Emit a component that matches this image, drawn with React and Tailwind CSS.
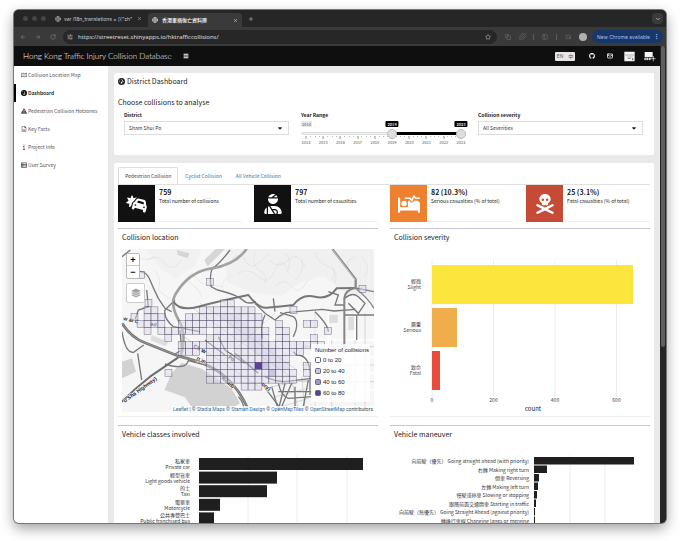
import React, { useState } from 'react';
import { ArrowLeft, ArrowRight, RotateCw, Star, Puzzle, Plus, X, Globe, SlidersHorizontal, ChevronDown, Copy, PanelLeft, ListMusic, Mail, MoreVertical, Menu } from 'lucide-react';
import {
  FaRegMap, FaGaugeHigh, FaTriangleExclamation, FaRegFileLines, FaInfo, FaTableList,
  FaGithub, FaCarBurst, FaUserInjured, FaBedPulse, FaSkullCrossbones, FaCaretDown, FaLayerGroup
} from 'react-icons/fa6';

const NAV_ITEMS = [
  { label: 'Collision Location Map', icon: FaRegMap },
  { label: 'Dashboard', icon: FaGaugeHigh, active: true },
  { label: 'Pedestrian Collision Hotzones', icon: FaTriangleExclamation },
  { label: 'Key Facts', icon: FaRegFileLines },
  { label: 'Project Info', icon: FaInfo },
  { label: 'User Survey', icon: FaTableList },
];

const STATS = [
  { value: '759', label: 'Total number of collisions', icon: FaCarBurst, color: 'bg-[#111111]' },
  { value: '797', label: 'Total number of casualties', icon: FaUserInjured, color: 'bg-[#111111]' },
  { value: '82 (10.3%)', label: 'Serious casualties (% of total)', icon: FaBedPulse, color: 'bg-[#ee8130]' },
  { value: '25 (3.1%)', label: 'Fatal casualties (% of total)', icon: FaSkullCrossbones, color: 'bg-[#c64b37]' },
];

const YEARS = [2014, 2015, 2016, 2017, 2018, 2019, 2020, 2021, 2022, 2023];

const SEVERITY = [
  { zh: '輕微', en: 'Slight', width: 201, fill: '#fce53d' },
  { zh: '嚴重', en: 'Serious', width: 25, fill: '#f0ad4b' },
  { zh: '致命', en: 'Fatal', width: 8, fill: '#e74c3c' },
];

const CLASSES = [
  { zh: '私家車', en: 'Private car', width: 164 },
  { zh: '輕型貨車', en: 'Light goods vehicle', width: 78 },
  { zh: '的士', en: 'Taxi', width: 68 },
  { zh: '電單車', en: 'Motorcycle', width: 21 },
  { zh: '公共專營巴士', en: 'Public franchised bus', width: 15 },
];

const MANEUVERS = [
  { label: '向前駛（優先） Going straight ahead (with priority)', width: 100 },
  { label: '右轉 Making right turn', width: 13 },
  { label: '倒車 Reversing', width: 5 },
  { label: '左轉 Making left turn', width: 4 },
  { label: '慢駛或停車 Slowing or stopping', width: 3 },
  { label: '跟隨前面交通開車 Starting in traffic', width: 2 },
  { label: '向前駛（無優先） Going Straight Ahead (against priority)', width: 1 },
  { label: '轉換行車線 Changing lanes or merging', width: 1 },
];

// [row, first column, last column] counted from the busiest cell
const CELL_RUNS = [
  [-9, -5, -4],
  [-8, -16, -15], [-8, -8, -1],
  [-7, -16, -14], [-7, -10, 0],
  [-6, -17, -14], [-6, -11, 0], [-6, 3, 3], [-6, 7, 8],
  [-5, -16, -16], [-5, -14, -8], [-5, -6, 1], [-5, 3, 4],
  [-4, -13, -13], [-4, -7, 1], [-4, 3, 4], [-4, 8, 8],
  [-3, -11, 9],
  [-2, -11, -9], [-2, -7, -5], [-2, -3, 6],
  [-1, -7, 4],
  [0, -7, 4], [0, 7, 7],
  [1, -7, 5], [1, 7, 7],
  [2, -7, 5],
  [3, -2, 0],
];

const LONE_CELLS = [[275, 115], [150, 388], [525, 200], [628, 262], [732, 137], [90, 178], [68, 95], [48, 221]];

const LEGEND = [
  ['0 to 20', '#f7f5fb'],
  ['20 to 40', '#cbc9e2'],
  ['40 to 60', '#9e9ac8'],
  ['60 to 80', '#5b4397'],
];

function BrowserChrome() {
  return (
    <div className="text-[#c9c9c9] font-['Inter','Noto_Sans_CJK_TC',sans-serif] text-[5px] leading-[8px]">
      <div className="flex items-center h-[17px] bg-[#262626] pl-[9px] pr-[3px]">
        <div className="flex gap-[4px]">
          <span className="w-[5px] h-[5px] rounded-full bg-[#454545]" />
          <span className="w-[5px] h-[5px] rounded-full bg-[#454545]" />
          <span className="w-[5px] h-[5px] rounded-full bg-[#454545]" />
        </div>
        <div className="flex flex-none items-center w-[102px] pl-[9px] pr-[6px]">
          <Globe className="w-[6px] h-[6px] mr-[3px] shrink-0" />
          <span className="flex-1 whitespace-nowrap">{'var i18n_translations = [{"zh"'}</span>
          <X className="w-[5px] h-[5px] shrink-0" />
        </div>
        <div className="flex items-center w-[94px] h-[14px] self-end rounded-t bg-[#3a3a3a] pl-[4px] pr-[4px] text-white">
          <Globe className="w-[6px] h-[6px] mr-[4px]" />
          <span className="flex-1 font-medium">香港車禍傷亡資料庫</span>
          <X className="w-[5px] h-[5px]" />
        </div>
        <button aria-label="New tab" className="ml-[6px]"><Plus className="w-[6px] h-[6px]" /></button>
        <button aria-label="Search tabs" className="ml-auto flex items-center justify-center w-[11px] h-[11px] rounded bg-[#3a3a3a]">
          <ChevronDown className="w-[6px] h-[6px]" strokeWidth={3} />
        </button>
      </div>
      <div className="flex items-center h-[19px] bg-[#3a3a3a] pl-[6px] pr-[3px]">
        <div className="flex gap-[9px] text-[#8a8a8a]">
          <button aria-label="Back"><ArrowLeft className="w-[6px] h-[6px]" /></button>
          <button aria-label="Forward"><ArrowRight className="w-[6px] h-[6px]" /></button>
          <button aria-label="Reload"><RotateCw className="w-[6px] h-[6px]" /></button>
        </div>
        <div className="flex flex-1 items-center h-[14px] ml-[7px] mr-[8px] rounded-full bg-[#272727] pl-[4px] pr-[6px]">
          <SlidersHorizontal className="w-[6px] h-[6px] mr-[5px]" />
          <input
            aria-label="Address"
            readOnly
            value="https://streetreset.shinyapps.io/hktrafficcollisions/"
            className="flex-1 min-w-0 bg-transparent outline-none font-['Open_Sans',sans-serif] text-[6px] text-[#e0e0e0]"
          />
          <Star className="w-[6px] h-[6px]" />
        </div>
        <div className="flex items-center text-[#777777]">
          <Copy className="w-[6px] h-[6px] mr-[8px]" />
          <Puzzle className="w-[7px] h-[7px] mr-[7px]" />
          <span className="w-px h-[6px] bg-[#5c5c5c] mr-[8px]" />
          <PanelLeft className="w-[6px] h-[6px] mr-[8px]" />
          <span className="w-px h-[6px] bg-[#5c5c5c] mr-[8px]" />
          <ListMusic className="w-[6px] h-[6px] mr-[8px]" />
          <span className="w-[8px] h-[8px] rounded-full bg-[#b0b0b0] mr-[5px]" />
        </div>
        <button className="flex items-center h-[13px] rounded-full bg-[#17376b] text-[#a5bfe8] pl-[5px] pr-[3px] whitespace-nowrap">
          New Chrome available
          <MoreVertical className="w-[7px] h-[7px] ml-[3px]" />
        </button>
      </div>
    </div>
  );
}

function Header() {
  return (
    <header className="flex items-center h-[20px] bg-[#0f0f0f] text-white pl-[9px] pr-[4px]">
      <h1 className="font-['Lato',sans-serif] font-light text-[8px] leading-[12px] whitespace-nowrap">
        Hong Kong Traffic Injury Collision Database
      </h1>
      <button aria-label="Toggle sidebar" className="ml-[11px]"><Menu className="w-[6px] h-[6px]" strokeWidth={4} /></button>
      <div className="flex items-center ml-auto">
        <button className="flex items-center justify-center gap-[5px] w-[20px] h-[9px] mr-[14px] rounded-[1px] bg-[#e6e6e6] text-[#555555] text-[5px] leading-[8px]">
          <span>EN</span><span>中</span>
        </button>
        <a href="#github" aria-label="GitHub" className="mr-[12px]"><FaGithub className="w-[6px] h-[6px]" /></a>
        <a href="#mail" aria-label="Email" className="mr-[11px]"><Mail className="w-[6px] h-[6px]" strokeWidth={3} /></a>
        <a href="#street-reset" aria-label="Street Reset" className="mr-[9px]">
          <svg className="w-[11px] h-[11px]" viewBox="0 0 33 33">
            <path d="M1 2h31v29H1z" fill="#f4f4f4" />
            <path d="M1 12h31" stroke="#999999" strokeWidth="2" />
            <path d="M10 17h16v2H10zM11 22h9v2h-9zM24 22h4v6h-4z" fill="#777777" />
          </svg>
        </a>
        <a href="#map" aria-label="Partner">
          <svg className="w-[12px] h-[11px]" viewBox="0 0 36 33">
            <path d="M2 3h24v16H2z" fill="#f4f4f4" />
            <path d="M2 22h3v4H2zM8 22h4v4H8zM15 22h4v4h-4zM28 15v16M20 23h15" fill="#cccccc" stroke="#f4f4f4" strokeWidth="2" />
          </svg>
        </a>
      </div>
    </header>
  );
}

function Sidebar() {
  return (
    <nav className="w-[94px] shrink-0 bg-white">
      {NAV_ITEMS.map(({ label, icon: Icon, active }) => (
        <a
          key={label}
          href="#nav"
          className={`flex items-center gap-[1px] h-[18px] pl-[5px] text-[5px] leading-[8px] whitespace-nowrap border-l-2 ${
            active ? 'border-black text-black font-medium' : 'border-transparent text-[#555555]'
          }`}
        >
          <Icon className="w-[6px] h-[6px]" />
          {label}
        </a>
      ))}
    </nav>
  );
}

function SelectBox({ id, label, value }) {
  return (
    <div>
      <label htmlFor={id} className="block font-bold text-[5px] leading-[8px] mb-[2px]">{label}</label>
      <div className="relative">
        <select id={id} className="block w-full h-[14px] appearance-none border border-[#dddddd] bg-white pl-[4px] text-[5px] leading-[8px] text-[#333333]">
          <option>{value}</option>
        </select>
        <FaCaretDown className="absolute right-[6px] top-[4px] w-[6px] h-[6px] pointer-events-none" />
      </div>
    </div>
  );
}

function YearRange() {
  const [from, setFrom] = useState(2019);
  const [to, setTo] = useState(2023);
  const pos = (year) => `${((year - 2014) / 9) * 100}%`;
  const thumb = 'absolute inset-x-0 top-[8px] w-full h-[10px] appearance-none bg-transparent pointer-events-none [&::-webkit-slider-thumb]:appearance-none [&::-webkit-slider-thumb]:pointer-events-auto [&::-webkit-slider-thumb]:w-[10px] [&::-webkit-slider-thumb]:h-[10px] [&::-webkit-slider-thumb]:rounded-full [&::-webkit-slider-thumb]:border [&::-webkit-slider-thumb]:border-solid [&::-webkit-slider-thumb]:border-[#bbbbbb] [&::-webkit-slider-thumb]:bg-[#dedede]';

  return (
    <fieldset>
      <legend className="font-bold text-[5px] leading-[8px] mb-[2px]">Year Range</legend>
      <div className="relative h-[24px] text-[4px] leading-[6px]">
        <span className="absolute left-0 top-0 px-[1px] bg-[#e8e8e8] text-[#555555]">2014</span>
        <div className="absolute inset-x-0 top-[11px] h-[3px] rounded-full border border-[#dddddd] bg-[#f0f0f0]" />
        <div className="absolute top-0 left-[5px] right-[5px] h-full">
          <div className="absolute top-[11px] h-[3px] bg-black" style={{ left: pos(from), right: `${((2023 - to) / 9) * 100}%` }} />
          {[from, to].map((year, i) => (
            <span key={i} className="absolute top-0 -translate-x-1/2 px-[2px] rounded-[1px] bg-black text-white font-medium" style={{ left: pos(year) }}>{year}</span>
          ))}
          {YEARS.map((year) => (
            <span key={year} className="absolute top-[15px] -translate-x-1/2 flex flex-col items-center text-[#555555]" style={{ left: pos(year) }}>
              <span className="w-px h-[3px] bg-[#999999]" />
              {year}
            </span>
          ))}
          <div className="absolute inset-x-0 top-[15px] flex justify-between">
            {Array.from({ length: 37 }, (_, i) => <span key={i} className="w-px h-px bg-[#bbbbbb]" />)}
          </div>
        </div>
        <input type="range" aria-label="From year" min={2014} max={2023} value={from} onChange={(e) => setFrom(Math.min(+e.target.value, to))} className={thumb} />
        <input type="range" aria-label="To year" min={2014} max={2023} value={to} onChange={(e) => setTo(Math.max(+e.target.value, from))} className={thumb} />
      </div>
    </fieldset>
  );
}

function Card({ title, children }) {
  return (
    <section className="border-t border-[#c4c6d4] border-b border-b-[#eeeeee]">
      <h3 className="px-[4px] pt-[3px] text-[7px] leading-[10px]">{title}</h3>
      {children}
    </section>
  );
}

function CollisionMap() {
  const cell = 20.8;
  const fillFor = (row, col) => {
    if (row === 0 && col === 0) return '#5b4397';
    if ((row === 1 && col === 2) || (row === 0 && col === 1)) return '#9e98d0';
    if (row > -8 && row < 1 && Math.abs(row - col + 3) < 2) return '#c9c5e2';
    if (row === 0 && col === -1) return '#c0bbdf';
    return '#dcd9ea';
  };

  return (
    <div className="relative mx-[4px] mt-[7px] mb-[4px]">
      <svg className="block w-full" viewBox="21 27 756 489" fill="none">
        <rect x="21" y="27" width="756" height="489" fill="#f6f6f6" />
        {/* hills and parks */}
        <path d="M330 27h447v150l-90-20-60-50-70 20-60 40-90-10-70-30z" fill="#f0f0f0" />
        <path d="M90 27h170l-20 50-60 40-40-30z" fill="#f1f1f1" />
        <path d="M185 30l38 10-5 15-30-10zM268 60l34-33h28l-52 52z" fill="#d6d6d6" />
        <path d="M21 365l30-10 12 40-42 20zM148 450l22-50 30-32 60 18 90 60 25 44-20 12H230l-20-30z" fill="#d2d2d2" />
        <path d="M110 285l50 20-8 14-46-18zM640 225h28v24h-28zM700 230h22v40h-22z" fill="#dddddd" />
        <g stroke="#d9d9d9" strokeWidth="1.5">
          <path d="M100 60q30-20 50 10t50-10M60 40q20 30 60 10M350 60q25-30 40 0t40 10 30-30M370 100q30-20 60 10t50-20 40 10M460 60q30 30 60 0t50 20M600 40q10 30 40 40t10 40M480 140q30-30 50 0t50-20M560 60q10 40-20 60M650 80q20 20 10 50" />
          <path d="M210 120q40 20 50 50M230 100l30 30 60 10M120 90q20 30 10 60l40 30M720 50q-30 10-20 30M340 110q-30 20-10 50M740 50q30 30 10 60M420 40q-10 30 10 50 30 10 20 40M510 40q20 10 10 50" />
        </g>
        {/* minor streets */}
        <path d="M220 200l300 210M250 190l290 200M300 180l240 170M200 280l240 160M230 370l180-150M280 400l200-180M340 420l160-150M400 430l120-110M600 215v290M640 215v290M560 300h217M560 350h217M560 400h217M560 450h217M720 220v290" stroke="#ffffff" strokeWidth="5" />
        <path d="M225 200l300 210M255 190l290 200M200 285l240 160M280 400l200-180M560 320h217M560 375h217M560 425h217M600 215v290M720 300v200M750 220v290M470 440l110-20M480 470l100-25M500 500l80-25M530 420l20 90M560 410l10 100M650 300v210" stroke="#b5b5b5" strokeWidth="1.5" />
        {/* secondary roads */}
        <g stroke="#797979" strokeWidth="4">
          <path d="M345 30q-30 40-52 55-10 15-5 55l20 10q60 15 75 30t40 5" />
          <path d="M75 95q20 0 30 25t25 55l20 30 20 10M21 50l25-20M95 150l5 50-30 10-10 30M150 210q-5 25 25 50l80 15M150 210l30-30" />
          <path d="M420 190l30 30 30 20 12-10 20-12 110-10 35 5 65-5M475 175l5 40M495 218l40 12q15 10 8 40l-8 20M450 225q-15 30-8 70M600 215q40 40 40 60M690 225h87M725 225v75M640 155l30 10-10 30h30M690 175q20-20 40-5l20 20-20 30-30-30" />
          <path d="M68 340l12 80M21 275q10 65 35 62l30-22M195 270l5 60-25 15M270 300l60 45M310 290l20 40 60 40M360 340l70 60M440 430l60 80M490 430q10 40 30 45l70-5M500 500l30-70M540 440v70M580 420l-15 80M490 455h100M535 335l10 10q40 0 40 60v60" />
          <path d="M150 372q60 20 70-10l40 10M370 470q20 20 15 45M450 410q30 15 60 15l80-10M470 440l20 70M510 430l-20 80" />
        </g>
        {/* highways */}
        <path d="M395 27Q360 75 290 85T180 165Q165 195 191 240T197 350" stroke="#a2a2a2" strokeWidth="8" />
        <path d="M175 185Q195 215 250 200T400 165Q430 205 455 203T535 195Q560 160 600 170T665 145L721 144" stroke="#777777" strokeWidth="6" />
        <path d="M721 144Q690 150 688 175V340" stroke="#858585" strokeWidth="6" />
        <path d="M721 144Q760 175 777 205M721 144L777 155" stroke="#858585" strokeWidth="4" />
        <path d="M652 27L722 118V148" stroke="#8a8a8a" strokeWidth="7" />
        <path d="M651 27L721 120" stroke="#e5e5e5" strokeWidth="2" />
        <path d="M21 485Q60 445 105 410L190 352" stroke="#6f6f6f" strokeWidth="6" />
        <path d="M21 250Q50 295 90 308L195 350Q285 370 330 410T398 505" stroke="#747474" strokeWidth="8" />
        <path d="M21 250Q50 295 90 308L195 350Q285 370 330 410T398 505" stroke="#a8a8a8" strokeWidth="2" />
        <g className="font-['Liberation_Sans',sans-serif]" fill="#222222" stroke="#ffffff" strokeWidth="3" paintOrder="stroke" fontSize="16" fontWeight="bold">
          <text transform="translate(30 488) rotate(-36)">o Sha Highway)</text>
          <text transform="translate(24 240) rotate(14)">w at C</text>
          <text transform="translate(105 256) rotate(12)">ad</text>
          <text transform="translate(234 322) rotate(30)">Ch W</text>
          <text transform="translate(243 361) rotate(20)">(Lin</text>
          <text transform="translate(338 354) rotate(35)">Po</text>
          <text transform="translate(318 416) rotate(40)">Road)</text>
          <text transform="translate(438 435) rotate(35)">ory)</text>
        </g>
        {/* collision grid */}
        <g stroke="#3d3654" strokeOpacity="0.7" strokeWidth="1.5">
          {CELL_RUNS.flatMap(([row, first, last]) =>
            Array.from({ length: last - first + 1 }, (_, i) => {
              const col = first + i;
              return (
                <rect
                  key={`${row}/${col}`}
                  x={420 + col * cell}
                  y={367 + row * cell}
                  width={cell}
                  height={cell}
                  fill={fillFor(row, col)}
                  fillOpacity={row === 0 && col === 0 ? 1 : 0.5}
                />
              );
            })
          )}
          {LONE_CELLS.map(([x, y]) => (
            <rect key={`${x}-${y}`} x={x} y={y} width={cell} height={cell} fill="#dcd9ea" fillOpacity="0.5" />
          ))}
        </g>
      </svg>

      <div className="absolute left-[4px] top-[4px] flex flex-col w-[14px] rounded-[2px] border border-[#bbbbbb] bg-white font-['Liberation_Sans',sans-serif] font-bold text-[9px] leading-[12px] text-black">
        <button aria-label="Zoom in" className="h-[12px] border-b border-[#cccccc]">+</button>
        <button aria-label="Zoom out" className="h-[12px]">−</button>
      </div>
      <button aria-label="Layers" className="absolute left-[4px] top-[34px] flex items-center justify-center w-[19px] h-[20px] rounded-[2px] border border-[#cccccc] bg-white text-[#a5a5a5]">
        <FaLayerGroup className="w-[10px] h-[10px]" />
      </button>
      <div className="absolute right-[4px] bottom-[10px] w-[59px] rounded-[2px] bg-white/85 px-[4px] py-[2px] font-['Liberation_Sans',sans-serif] text-[6px] leading-[8px] text-[#222222] whitespace-nowrap">
        <p className="mb-[2px]">Number of collisions</p>
        {LEGEND.map(([label, color]) => (
          <p key={label} className="flex items-center gap-[2px] mb-[3px]">
            <svg className="w-[6px] h-[6px]" viewBox="0 0 6 6"><rect x="0.5" y="0.5" width="5" height="5" rx="1" fill={color} stroke="#6a6480" /></svg>
            {label}
          </p>
        ))}
      </div>
      <p className="absolute right-0 bottom-0 bg-white/80 px-[1px] font-['Roboto',sans-serif] text-[5px] leading-[6px] text-[#444444] whitespace-nowrap">
        <a href="#leaflet" className="text-[#2f6f9f]">Leaflet</a> | © <a href="#stadia" className="text-[#2f6f9f]">Stadia Maps</a>
        {' '}© <a href="#stamen" className="text-[#2f6f9f]">Stamen Design</a> © <a href="#omt" className="text-[#2f6f9f]">OpenMapTiles</a>
        {' '}© <a href="#osm" className="text-[#2f6f9f]">OpenStreetMap</a> contributors
      </p>
    </div>
  );
}

function SeverityChart() {
  return (
    <svg className="block w-full mt-[4px] mb-[3px]" viewBox="0 0 260 167" fontSize="5" fill="#444444">
      {[0, 200, 400, 600].map((tick, i) => (
        <g key={tick}>
          <line x1={42 + i * 61.5} x2={42 + i * 61.5} y1="14" y2="151" stroke="#ececec" />
          <text x={42 + i * 61.5} y="156" textAnchor="middle">{tick}</text>
        </g>
      ))}
      {SEVERITY.map(({ zh, en, width, fill }, i) => (
        <g key={en}>
          <rect x="42" y={19 + i * 43} width={width} height="39" fill={fill} />
          <text x="31" y={37 + i * 43} textAnchor="end">{zh}</text>
          <text x="31" y={43 + i * 43} textAnchor="end">{en}</text>
        </g>
      ))}
      <text x="143" y="165" textAnchor="middle" fontSize="6" fill="#222222">count</text>
    </svg>
  );
}

function ClassesChart() {
  return (
    <svg className="block w-full mt-[4px]" viewBox="0 0 260 160" fontSize="5" fill="#333333">
      {[130, 179, 229].map((x) => <line key={x} x1={x} x2={x} y1="12" y2="160" stroke="#ececec" />)}
      {CLASSES.map(({ zh, en, width }, i) => (
        <g key={en}>
          <rect x="81" y={15 + i * 13.6} width={width} height="12" fill="#1f1f1f" />
          <text x="72" y={20 + i * 13.6} textAnchor="end">{zh}</text>
          <text x="72" y={26 + i * 13.6} textAnchor="end">{en}</text>
        </g>
      ))}
    </svg>
  );
}

function ManeuverChart() {
  return (
    <svg className="block w-full mt-[4px]" viewBox="0 0 260 160" fontSize="5" fill="#333333">
      {[180, 215].map((x) => <line key={x} x1={x} x2={x} y1="12" y2="160" stroke="#ececec" />)}
      {MANEUVERS.map(({ label, width }, i) => (
        <g key={label}>
          <rect x="144" y={14 + i * 8.5} width={width} height="7.5" fill="#1f1f1f" />
          <text x="139" y={20 + i * 8.5} textAnchor="end">{label}</text>
        </g>
      ))}
    </svg>
  );
}

function App() {
  return (
    <div className="h-screen overflow-hidden bg-white px-[14px] pt-[10px] pb-[18px] font-['Noto_Sans_CJK_TC',sans-serif] text-[#222222]">
      <div className="flex flex-col h-full overflow-hidden rounded-[5px] bg-[#262626] shadow-[0_5px_14px_rgba(0,0,0,0.4)] ring-1 ring-[#777777]">
        <BrowserChrome />
        <div className="flex flex-1 min-h-0">
          <div className="flex flex-col flex-1 min-w-0 overflow-hidden">
            <Header />
            <div className="flex flex-1 min-h-0 bg-[#e9e9e9]">
              <Sidebar />
              <main className="flex-1 min-w-0 px-[6px] pt-[7px]">
                <section className="h-[82px] rounded-[2px] bg-white pl-[4px] pr-[11px] pt-[3px]">
                  <h2 className="flex items-center gap-[2px] text-[7px] leading-[10px]">
                    <FaGaugeHigh className="w-[7px] h-[7px]" />
                    District Dashboard
                  </h2>
                  <p className="mt-[11px] text-[7px] leading-[10px]">Choose collisions to analyse</p>
                  <div className="grid grid-cols-3 gap-3 pl-[6px] mt-[4px]">
                    <SelectBox id="district" label="District" value="Sham Shui Po" />
                    <YearRange />
                    <SelectBox id="severity" label="Collision severity" value="All Severities" />
                  </div>
                </section>

                <section className="mt-[8px] rounded-t-[2px] bg-white px-[4px] pt-[4px]">
                  <div className="flex border-b border-[#e0e0e0] text-[5px] leading-[8px]">
                    <button className="h-[17px] -mb-px px-[6px] rounded-t-[2px] border border-b-0 border-[#dddddd] bg-white text-[#444444]">Pedestrian Collision</button>
                    <button className="h-[17px] px-[7px] text-[#3c74ad]">Cyclist Collision</button>
                    <button className="h-[17px] px-[7px] text-[#3c74ad]">All Vehicle Collision</button>
                  </div>

                  <div className="grid grid-cols-4 gap-3">
                    {STATS.map(({ value, label, icon: Icon, color }) => (
                      <div key={label} className="flex h-[37px] border-b border-[#f0f0f0] whitespace-nowrap">
                        <div className={`flex items-center justify-center w-[37px] h-[37px] shrink-0 text-white ${color}`}>
                          <Icon className="w-[22px] h-[20px]" />
                        </div>
                        <div className="pl-[4px] pt-[2px]">
                          <p className="font-bold text-[7px] leading-[10px]">{value}</p>
                          <p className="text-[5px] leading-[8px]">{label}</p>
                        </div>
                      </div>
                    ))}
                  </div>

                  <div className="grid grid-cols-2 gap-x-3 gap-y-[8px] mt-[6px]">
                    <Card title="Collision location"><CollisionMap /></Card>
                    <Card title="Collision severity"><SeverityChart /></Card>
                    <Card title="Vehicle classes involved"><ClassesChart /></Card>
                    <Card title="Vehicle maneuver"><ManeuverChart /></Card>
                  </div>
                </section>
              </main>
            </div>
          </div>
          <div className="w-[6px] shrink-0 bg-[#262626] px-[1px]">
            <div className="h-[63%] rounded-full bg-[#5f5f5f]" />
          </div>
        </div>
      </div>
    </div>
  );
}

export default App;
